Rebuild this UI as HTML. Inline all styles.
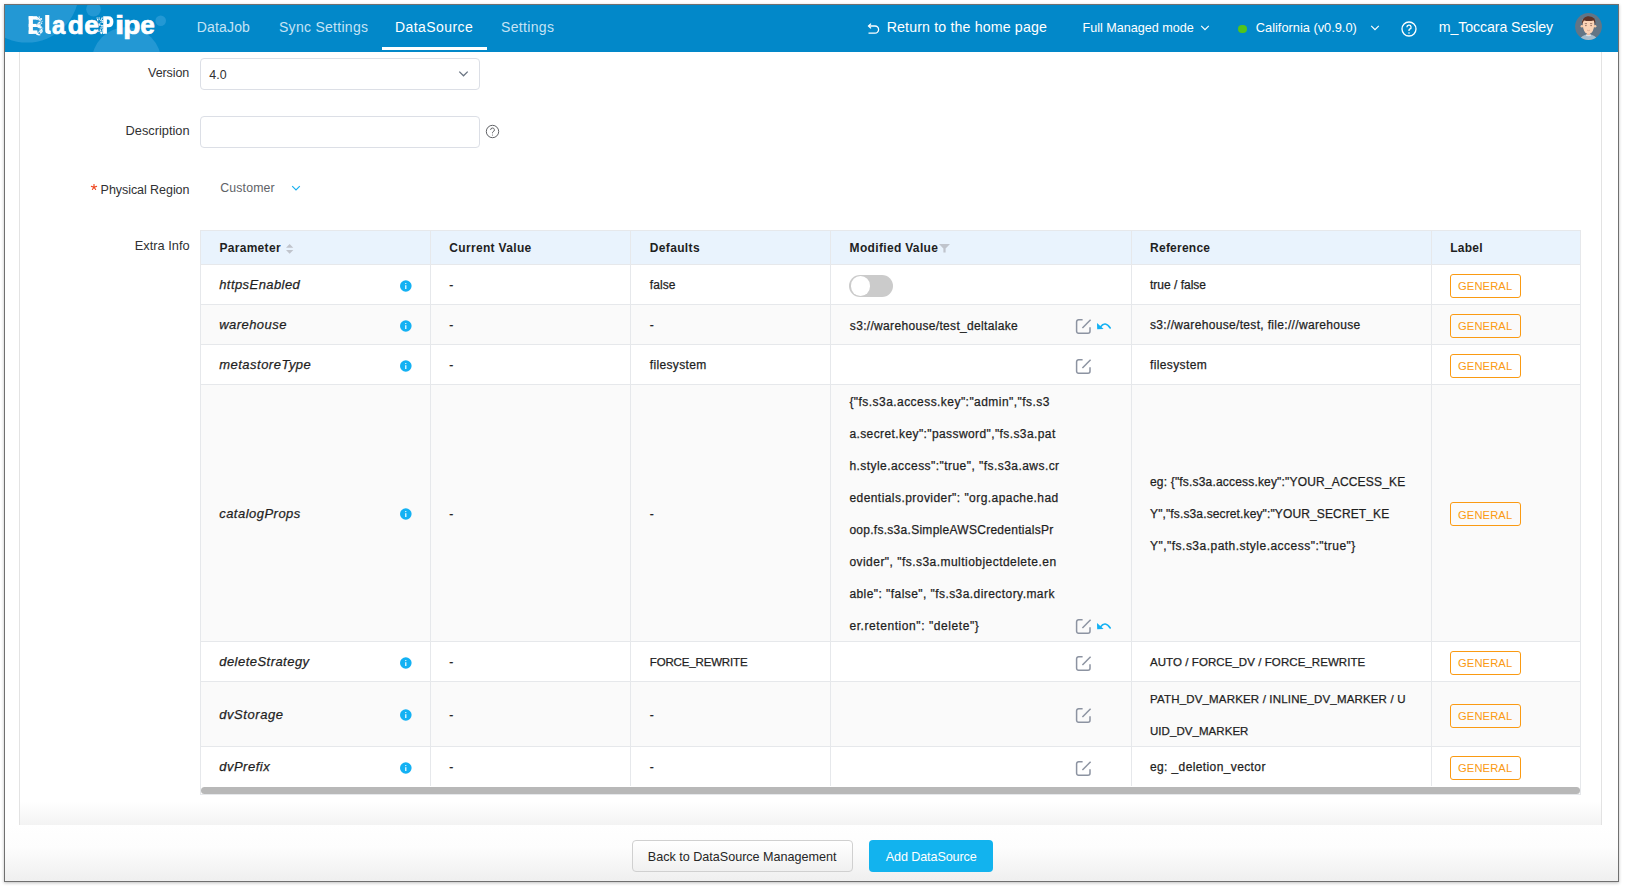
<!DOCTYPE html>
<html><head><meta charset="utf-8">
<style>
*{box-sizing:border-box;margin:0;padding:0}
html,body{width:1626px;height:888px;overflow:hidden;background:#fff;font-family:"Liberation Sans",sans-serif}
.r{position:absolute;display:block}
.t{position:absolute;white-space:pre;line-height:1;-webkit-text-stroke:0.25px currentColor}
</style></head><body>
<div class="r" style="left:4px;top:4px;width:1615px;height:878px;border:1px solid #707070;box-shadow:0 1px 3px rgba(0,0,0,.25);background:#fff"></div>
<div class="r" style="left:5px;top:5px;width:1613px;height:47px;background:#0288c9;overflow:hidden">
<svg width="1613" height="47" style="position:absolute;left:0;top:0">
<circle cx="22" cy="-14.4" r="52" fill="#2398d4"/>
<circle cx="88.5" cy="4.3" r="7.3" fill="#2398d4"/>
<circle cx="155.7" cy="15.8" r="5.3" fill="#2398d4"/>
<circle cx="121.5" cy="56.7" r="34.7" fill="#2398d4"/>
</svg></div>
<svg class="r" style="left:0;top:0" width="180" height="52" viewBox="0 0 180 52">
<rect x="28.7" y="16.2" width="4.2" height="17.7" fill="#fff"/>
<rect x="28.7" y="16.2" width="8.2" height="3.4" fill="#fff"/>
<rect x="28.7" y="23.9" width="8" height="3.1" fill="#fff"/>
<rect x="28.7" y="30.4" width="8.6" height="3.5" fill="#fff"/>
<rect x="37.8" y="18.4" width="1.3" height="1.3" fill="#fff" opacity="0.7"/><rect x="36.0" y="25.7" width="1.1" height="1.1" fill="#fff" opacity="1"/><rect x="38.5" y="31.2" width="0.9" height="0.9" fill="#fff" opacity="0.7"/><rect x="39.9" y="26.6" width="0.9" height="0.9" fill="#fff" opacity="1"/><rect x="37.0" y="26.1" width="0.9" height="0.9" fill="#fff" opacity="0.85"/><rect x="38.4" y="25.8" width="1.3" height="1.3" fill="#fff" opacity="0.85"/><rect x="39.4" y="28.5" width="0.9" height="0.9" fill="#fff" opacity="1"/><rect x="39.5" y="19.1" width="0.9" height="0.9" fill="#fff" opacity="1"/><rect x="40.5" y="26.2" width="1.3" height="1.3" fill="#fff" opacity="0.7"/><rect x="39.0" y="25.6" width="1.1" height="1.1" fill="#fff" opacity="0.85"/><rect x="39.6" y="24.1" width="1.1" height="1.1" fill="#fff" opacity="0.7"/><rect x="41.1" y="28.8" width="0.9" height="0.9" fill="#fff" opacity="0.7"/><rect x="39.5" y="25.5" width="1.1" height="1.1" fill="#fff" opacity="1"/><rect x="38.6" y="27.1" width="0.9" height="0.9" fill="#fff" opacity="0.7"/><rect x="39.1" y="18.6" width="1.1" height="1.1" fill="#fff" opacity="0.7"/><rect x="39.4" y="30.5" width="1.1" height="1.1" fill="#fff" opacity="0.85"/><rect x="40.4" y="26.8" width="1.3" height="1.3" fill="#fff" opacity="0.85"/><rect x="37.7" y="26.5" width="1.3" height="1.3" fill="#fff" opacity="0.85"/><rect x="37.5" y="22.8" width="1.3" height="1.3" fill="#fff" opacity="0.85"/><rect x="36.7" y="17.7" width="0.9" height="0.9" fill="#fff" opacity="0.7"/><rect x="40.9" y="18.0" width="0.9" height="0.9" fill="#fff" opacity="0.85"/><rect x="38.2" y="32.1" width="0.9" height="0.9" fill="#fff" opacity="0.7"/><rect x="38.6" y="25.9" width="0.9" height="0.9" fill="#fff" opacity="0.85"/><rect x="41.5" y="20.8" width="1.1" height="1.1" fill="#fff" opacity="0.85"/><rect x="40.3" y="22.7" width="0.9" height="0.9" fill="#fff" opacity="0.7"/><rect x="36.1" y="18.4" width="1.3" height="1.3" fill="#fff" opacity="0.7"/><rect x="36.5" y="25.7" width="1.3" height="1.3" fill="#fff" opacity="1"/><rect x="37.7" y="17.9" width="1.3" height="1.3" fill="#fff" opacity="1"/><rect x="40.1" y="29.6" width="1.1" height="1.1" fill="#fff" opacity="1"/><rect x="41.1" y="23.0" width="1.1" height="1.1" fill="#fff" opacity="0.85"/><rect x="37.0" y="18.6" width="1.1" height="1.1" fill="#fff" opacity="1"/><rect x="36.6" y="17.4" width="1.1" height="1.1" fill="#fff" opacity="1"/><rect x="39.8" y="18.3" width="1.1" height="1.1" fill="#fff" opacity="0.85"/><rect x="39.7" y="24.5" width="0.9" height="0.9" fill="#fff" opacity="0.85"/><rect x="38.9" y="17.1" width="0.9" height="0.9" fill="#fff" opacity="1"/><rect x="41.3" y="18.6" width="0.9" height="0.9" fill="#fff" opacity="0.7"/><rect x="36.5" y="25.8" width="0.9" height="0.9" fill="#fff" opacity="1"/><rect x="36.1" y="31.6" width="1.3" height="1.3" fill="#fff" opacity="0.85"/><rect x="37.1" y="25.8" width="1.3" height="1.3" fill="#fff" opacity="0.85"/><rect x="40.0" y="27.2" width="0.9" height="0.9" fill="#fff" opacity="0.7"/><rect x="41.2" y="29.6" width="0.9" height="0.9" fill="#fff" opacity="0.7"/><rect x="39.1" y="22.3" width="0.9" height="0.9" fill="#fff" opacity="0.7"/><rect x="40.6" y="22.1" width="1.1" height="1.1" fill="#fff" opacity="0.7"/><rect x="39.9" y="32.6" width="0.9" height="0.9" fill="#fff" opacity="0.85"/><rect x="40.0" y="31.4" width="0.9" height="0.9" fill="#fff" opacity="0.85"/><rect x="41.0" y="29.8" width="1.1" height="1.1" fill="#fff" opacity="0.7"/><rect x="36.1" y="33.5" width="1.3" height="1.3" fill="#fff" opacity="0.85"/><rect x="36.1" y="18.5" width="0.9" height="0.9" fill="#fff" opacity="0.7"/><rect x="36.6" y="32.7" width="1.3" height="1.3" fill="#fff" opacity="0.7"/><rect x="39.8" y="26.8" width="1.1" height="1.1" fill="#fff" opacity="1"/><rect x="41.1" y="29.3" width="0.9" height="0.9" fill="#fff" opacity="1"/><rect x="40.7" y="18.1" width="0.9" height="0.9" fill="#fff" opacity="0.7"/><rect x="37.8" y="25.8" width="0.9" height="0.9" fill="#fff" opacity="0.7"/><rect x="38.7" y="26.6" width="1.3" height="1.3" fill="#fff" opacity="0.85"/><rect x="41.3" y="32.2" width="0.9" height="0.9" fill="#fff" opacity="1"/><rect x="36.6" y="25.2" width="1.1" height="1.1" fill="#fff" opacity="0.7"/><rect x="39.8" y="30.2" width="0.9" height="0.9" fill="#fff" opacity="0.7"/><rect x="36.3" y="16.7" width="1.3" height="1.3" fill="#fff" opacity="1"/><rect x="39.2" y="24.7" width="0.9" height="0.9" fill="#fff" opacity="1"/><rect x="38.7" y="16.0" width="0.9" height="0.9" fill="#fff" opacity="0.85"/><rect x="37.8" y="34.0" width="1.3" height="1.3" fill="#fff" opacity="1"/><rect x="39.1" y="30.8" width="1.3" height="1.3" fill="#fff" opacity="0.7"/><rect x="40.4" y="32.2" width="1.1" height="1.1" fill="#fff" opacity="1"/><rect x="38.6" y="23.4" width="1.1" height="1.1" fill="#fff" opacity="0.85"/><rect x="38.5" y="19.5" width="1.1" height="1.1" fill="#fff" opacity="0.7"/><rect x="40.5" y="28.0" width="0.9" height="0.9" fill="#fff" opacity="0.85"/><rect x="37.0" y="33.6" width="1.1" height="1.1" fill="#fff" opacity="0.85"/><rect x="38.4" y="22.3" width="0.9" height="0.9" fill="#fff" opacity="1"/><rect x="38.2" y="25.3" width="1.1" height="1.1" fill="#fff" opacity="1"/><rect x="37.4" y="32.7" width="0.9" height="0.9" fill="#fff" opacity="0.85"/><rect x="40.8" y="31.1" width="1.3" height="1.3" fill="#fff" opacity="0.85"/><rect x="38.3" y="25.7" width="1.3" height="1.3" fill="#fff" opacity="1"/><rect x="39.0" y="21.7" width="1.1" height="1.1" fill="#fff" opacity="0.7"/><rect x="41.1" y="19.0" width="0.9" height="0.9" fill="#fff" opacity="0.85"/><rect x="42.1" y="27.6" width="1.1" height="1.1" fill="#fff" opacity="0.7"/><rect x="39.8" y="19.7" width="1.1" height="1.1" fill="#fff" opacity="0.7"/><rect x="38.7" y="21.9" width="1.3" height="1.3" fill="#fff" opacity="0.85"/><rect x="36.4" y="25.5" width="0.9" height="0.9" fill="#fff" opacity="0.7"/><rect x="36.8" y="33.2" width="1.3" height="1.3" fill="#fff" opacity="0.85"/><rect x="39.2" y="19.4" width="1.1" height="1.1" fill="#fff" opacity="1"/><rect x="40.2" y="20.6" width="0.9" height="0.9" fill="#fff" opacity="0.85"/><rect x="39.0" y="34.1" width="1.3" height="1.3" fill="#fff" opacity="0.85"/><rect x="37.2" y="24.0" width="1.3" height="1.3" fill="#fff" opacity="1"/><rect x="38.5" y="24.9" width="1.1" height="1.1" fill="#fff" opacity="1"/><rect x="41.7" y="29.3" width="0.9" height="0.9" fill="#fff" opacity="0.85"/><rect x="39.9" y="32.2" width="1.1" height="1.1" fill="#fff" opacity="0.7"/><rect x="38.2" y="25.1" width="1.1" height="1.1" fill="#fff" opacity="1"/><rect x="38.7" y="18.5" width="1.1" height="1.1" fill="#fff" opacity="0.7"/><rect x="37.3" y="33.8" width="1.3" height="1.3" fill="#fff" opacity="0.85"/><rect x="37.2" y="33.8" width="1.1" height="1.1" fill="#fff" opacity="0.7"/><rect x="38.2" y="24.5" width="1.3" height="1.3" fill="#fff" opacity="1"/><rect x="36.9" y="25.1" width="0.9" height="0.9" fill="#fff" opacity="0.7"/><rect x="37.3" y="17.2" width="1.1" height="1.1" fill="#fff" opacity="1"/><rect x="39.6" y="25.6" width="0.9" height="0.9" fill="#fff" opacity="1"/><rect x="41.7" y="30.4" width="1.3" height="1.3" fill="#fff" opacity="0.85"/><rect x="40.9" y="29.2" width="1.1" height="1.1" fill="#fff" opacity="0.7"/>
<path d="M45.2 14.9 H49.3 V29.8 Q49.3 30.8 50.8 30.8 V33.9 H48.6 Q45.2 33.9 45.2 30.6 Z" fill="#fff"/>
<text transform="translate(51.95,33.9) scale(0.934,1)" font-family="Liberation Sans" font-weight="bold" font-size="25.5" fill="#fff" stroke="#fff" stroke-width="0.7">a</text><text transform="translate(67.77,33.9) scale(1.031,1)" font-family="Liberation Sans" font-weight="bold" font-size="25.5" fill="#fff" stroke="#fff" stroke-width="0.7">d</text><text transform="translate(84.18,33.9) scale(1.024,1)" font-family="Liberation Sans" font-weight="bold" font-size="25.5" fill="#fff" stroke="#fff" stroke-width="0.7">e</text><text transform="translate(115.08,33.9) scale(1.306,1)" font-family="Liberation Sans" font-weight="bold" font-size="25.5" fill="#fff" stroke="#fff" stroke-width="0.7">i</text><text transform="translate(123.24,33.9) scale(1.100,1)" font-family="Liberation Sans" font-weight="bold" font-size="25.5" fill="#fff" stroke="#fff" stroke-width="0.7">p</text><text transform="translate(140.28,33.9) scale(1.024,1)" font-family="Liberation Sans" font-weight="bold" font-size="25.5" fill="#fff" stroke="#fff" stroke-width="0.7">e</text>
<path fill-rule="evenodd" d="M103.2 16.2 H108.3 Q113.4 16.2 113.4 21.7 Q113.4 27.2 108.3 27.2 H106.9 V33.7 H103.2 Z M106.9 19.5 H108 Q109.8 19.5 109.8 21.7 Q109.8 23.9 108 23.9 H106.9 Z" fill="#fff"/>
<rect x="101.5" y="25.3" width="1.1" height="1.1" fill="#fff" opacity="1"/><rect x="101.4" y="25.2" width="1.3" height="1.3" fill="#fff" opacity="1"/><rect x="100.5" y="30.5" width="0.9" height="0.9" fill="#fff" opacity="1"/><rect x="100.6" y="31.9" width="1.3" height="1.3" fill="#fff" opacity="1"/><rect x="101.0" y="18.0" width="0.9" height="0.9" fill="#fff" opacity="0.7"/><rect x="101.0" y="33.0" width="1.1" height="1.1" fill="#fff" opacity="0.85"/><rect x="100.4" y="27.3" width="1.3" height="1.3" fill="#fff" opacity="1"/><rect x="101.3" y="24.9" width="0.9" height="0.9" fill="#fff" opacity="0.85"/><rect x="102.1" y="29.4" width="1.3" height="1.3" fill="#fff" opacity="1"/><rect x="97.1" y="25.5" width="1.3" height="1.3" fill="#fff" opacity="1"/><rect x="99.8" y="30.4" width="1.1" height="1.1" fill="#fff" opacity="0.7"/><rect x="101.6" y="20.0" width="1.3" height="1.3" fill="#fff" opacity="1"/><rect x="99.2" y="24.7" width="1.3" height="1.3" fill="#fff" opacity="0.85"/><rect x="101.9" y="27.1" width="1.3" height="1.3" fill="#fff" opacity="0.7"/><rect x="97.0" y="19.0" width="1.1" height="1.1" fill="#fff" opacity="1"/><rect x="101.7" y="21.7" width="1.3" height="1.3" fill="#fff" opacity="0.7"/><rect x="96.6" y="17.5" width="1.1" height="1.1" fill="#fff" opacity="1"/><rect x="97.2" y="20.2" width="1.1" height="1.1" fill="#fff" opacity="0.85"/><rect x="101.5" y="21.4" width="1.1" height="1.1" fill="#fff" opacity="0.85"/><rect x="100.3" y="21.9" width="0.9" height="0.9" fill="#fff" opacity="0.85"/><rect x="96.6" y="24.4" width="1.3" height="1.3" fill="#fff" opacity="0.85"/><rect x="102.9" y="32.5" width="0.9" height="0.9" fill="#fff" opacity="1"/><rect x="97.1" y="29.4" width="1.1" height="1.1" fill="#fff" opacity="0.85"/><rect x="97.4" y="30.6" width="1.3" height="1.3" fill="#fff" opacity="0.85"/><rect x="102.7" y="28.6" width="0.9" height="0.9" fill="#fff" opacity="0.85"/><rect x="102.8" y="24.9" width="0.9" height="0.9" fill="#fff" opacity="0.7"/><rect x="96.5" y="25.0" width="1.1" height="1.1" fill="#fff" opacity="0.85"/><rect x="98.6" y="18.9" width="1.1" height="1.1" fill="#fff" opacity="0.85"/><rect x="98.7" y="31.0" width="0.9" height="0.9" fill="#fff" opacity="0.85"/><rect x="101.8" y="30.9" width="0.9" height="0.9" fill="#fff" opacity="0.7"/><rect x="101.5" y="32.0" width="1.1" height="1.1" fill="#fff" opacity="0.85"/><rect x="99.1" y="23.3" width="1.3" height="1.3" fill="#fff" opacity="0.7"/><rect x="99.0" y="23.9" width="1.1" height="1.1" fill="#fff" opacity="0.7"/><rect x="98.5" y="17.4" width="1.3" height="1.3" fill="#fff" opacity="0.85"/><rect x="100.9" y="19.1" width="1.1" height="1.1" fill="#fff" opacity="0.85"/><rect x="100.1" y="19.8" width="1.1" height="1.1" fill="#fff" opacity="0.85"/><rect x="102.7" y="30.5" width="1.3" height="1.3" fill="#fff" opacity="0.85"/><rect x="102.9" y="32.7" width="1.3" height="1.3" fill="#fff" opacity="0.7"/><rect x="101.5" y="17.4" width="1.3" height="1.3" fill="#fff" opacity="0.85"/><rect x="99.7" y="29.4" width="1.3" height="1.3" fill="#fff" opacity="0.85"/><rect x="99.9" y="32.2" width="1.3" height="1.3" fill="#fff" opacity="0.7"/><rect x="97.7" y="23.6" width="1.1" height="1.1" fill="#fff" opacity="0.85"/>
</svg>
<div class="t" style="left:196.80px;top:20.00px;font-size:14.0px;color:#c5e3f5;font-weight:normal;font-style:normal;letter-spacing:0.157px;-webkit-text-stroke:0;">DataJob</div>
<div class="t" style="left:279.00px;top:20.00px;font-size:14.0px;color:#c5e3f5;font-weight:normal;font-style:normal;letter-spacing:0.283px;-webkit-text-stroke:0;">Sync Settings</div>
<div class="t" style="left:395.00px;top:20.00px;font-size:14.0px;color:#ffffff;font-weight:normal;font-style:normal;letter-spacing:0.428px;-webkit-text-stroke:0;">DataSource</div>
<div class="t" style="left:501.00px;top:20.00px;font-size:14.0px;color:#c5e3f5;font-weight:normal;font-style:normal;letter-spacing:0.345px;-webkit-text-stroke:0;">Settings</div>
<div class="r" style="left:382px;top:47px;width:105px;height:3px;background:#fff"></div>
<svg class="r" style="left:866px;top:21px" width="15" height="14" viewBox="0 0 15 14">
<path d="M2.5 12.2 H9 A3.6 3.6 0 0 0 9 5 H3" fill="none" stroke="#fff" stroke-width="1.3"/>
<path d="M5 2.6 L2.5 5 L5 7.4" fill="none" stroke="#fff" stroke-width="1.3"/>
</svg>
<div class="t" style="left:886.70px;top:20.00px;font-size:14.2px;color:#fff;font-weight:normal;font-style:normal;letter-spacing:0.147px;-webkit-text-stroke:0;">Return to the home page</div>
<div class="t" style="left:1082.60px;top:22.00px;font-size:12.6px;color:#fff;font-weight:normal;font-style:normal;letter-spacing:-0.007px;-webkit-text-stroke:0;">Full Managed mode</div>
<svg class="r" style="left:1200px;top:24px" width="10" height="8" viewBox="0 0 10 8">
<path d="M1.2 1.8 L5 5.6 L8.8 1.8" fill="none" stroke="#fff" stroke-width="1.2"/></svg>
<div class="r" style="left:1238px;top:24.5px;width:8.5px;height:8.5px;background:#52c41a;border-radius:50%"></div>
<div class="t" style="left:1255.80px;top:22.00px;font-size:12.8px;color:#fff;font-weight:normal;font-style:normal;-webkit-text-stroke:0;">California (v0.9.0)</div>
<svg class="r" style="left:1370px;top:24px" width="10" height="8" viewBox="0 0 10 8">
<path d="M1.2 1.8 L5 5.6 L8.8 1.8" fill="none" stroke="#fff" stroke-width="1.2"/></svg>
<svg class="r" style="left:1401px;top:21px" width="16" height="16" viewBox="0 0 16 16">
<circle cx="8" cy="8" r="7" fill="none" stroke="#fff" stroke-width="1.3"/>
<path d="M5.9 6.2 A2.1 2.1 0 1 1 8.6 8.2 Q8 8.5 8 9.4 V10" fill="none" stroke="#fff" stroke-width="1.3"/>
<circle cx="8" cy="12" r="0.8" fill="#fff"/></svg>
<div class="t" style="left:1438.70px;top:20.00px;font-size:14.2px;color:#fff;font-weight:normal;font-style:normal;letter-spacing:-0.094px;-webkit-text-stroke:0;">m_Toccara Sesley</div>
<svg class="r" style="left:1575px;top:13px" width="27" height="27" viewBox="0 0 27 27">
<defs><clipPath id="ac"><circle cx="13.5" cy="13.5" r="13.4"/></clipPath></defs>
<g clip-path="url(#ac)">
<rect width="27" height="27" fill="#637585"/>
<ellipse cx="13.5" cy="26.5" rx="8.2" ry="5" fill="#a6bccb"/>
<ellipse cx="13.5" cy="22.2" rx="2.6" ry="1.1" fill="#dde7ee"/>
<rect x="11.9" y="18.5" width="3.2" height="3.6" fill="#efbd9e"/>
<circle cx="6.9" cy="13.3" r="1.3" fill="#f6c9a8"/>
<circle cx="20.1" cy="13.3" r="1.3" fill="#f6c9a8"/>
<path d="M7.6 6.5 Q7.4 16.6 10.3 19.4 Q13.5 21.9 16.7 19.4 Q19.6 16.6 19.4 6.5 Z" fill="#fbd3b6"/>
<path d="M6.9 12.2 Q6.2 4.6 12.6 3.2 Q17.2 2.8 19.6 5.8 Q20.8 8.6 20.1 12.2 Q19.6 9.2 18.6 7.6 Q14 8.6 9 7.6 Q7.6 9.4 6.9 12.2Z" fill="#5d3327"/>
<rect x="9.8" y="10.3" width="2.2" height="0.8" fill="#8a6658"/>
<rect x="15" y="10.3" width="2.2" height="0.8" fill="#8a6658"/>
<ellipse cx="10.9" cy="12.6" rx="0.9" ry="0.6" fill="#8a6658"/>
<ellipse cx="16.1" cy="12.6" rx="0.9" ry="0.6" fill="#8a6658"/>
<path d="M12 17.2 Q13.5 18 15 17.2" fill="none" stroke="#d9a48a" stroke-width="0.7"/>
</g></svg>
<div class="r" style="left:19px;top:52px;width:1583px;height:773px;border-left:1px solid #e3e3e3;border-right:1px solid #e3e3e3;background:linear-gradient(#fff 0,#fff 749px,#f3f3f3 773px)"></div>
<div class="r" style="left:5px;top:825px;width:1613px;height:56px;background:linear-gradient(#fff 0%,#fdfdfd 40%,#efefef 100%)"></div>
<div class="t" style="right:1436.84px;top:67.00px;font-size:12.5px;color:#303133;font-weight:normal;font-style:normal;letter-spacing:-0.090px;-webkit-text-stroke:0;">Version</div>
<div class="r" style="left:200px;top:58px;width:280px;height:32px;border:1px solid #dcdfe6;border-radius:4px;background:#fff"></div>
<div class="t" style="left:209.30px;top:69.00px;font-size:12.4px;color:#303133;font-weight:normal;font-style:normal;-webkit-text-stroke:0;">4.0</div>
<svg class="r" style="left:458px;top:69px" width="11" height="8" viewBox="0 0 11 8">
<path d="M1.3 2.6 L5.5 6.8 L9.7 2.6" fill="none" stroke="#6a7482" stroke-width="1.3"/></svg>
<div class="t" style="right:1436.37px;top:125.00px;font-size:12.8px;color:#303133;font-weight:normal;font-style:normal;letter-spacing:0.011px;-webkit-text-stroke:0;">Description</div>
<div class="r" style="left:200px;top:116px;width:280px;height:32px;border:1px solid #dcdfe6;border-radius:4px;background:#fff"></div>
<svg class="r" style="left:485px;top:124px" width="15" height="15" viewBox="0 0 15 15">
<circle cx="7.5" cy="7.5" r="6.2" fill="none" stroke="#606266" stroke-width="1"/>
<path d="M5.6 5.9 A1.9 1.9 0 1 1 8.1 7.7 Q7.5 8 7.5 8.8 V9.3" fill="none" stroke="#606266" stroke-width="1"/>
<circle cx="7.5" cy="11" r="0.6" fill="#606266"/></svg>
<svg class="r" style="left:90px;top:183px" width="8" height="8" viewBox="0 0 8 8"><g stroke="#ef4b26" stroke-width="1.15" stroke-linecap="round"><path d="M4 4.2 V1.6"/><path d="M4 4.2 L6.6 3.4"/><path d="M4 4.2 L5.6 6.5"/><path d="M4 4.2 L2.4 6.5"/><path d="M4 4.2 L1.4 3.4"/></g></svg>
<div class="t" style="right:1436.60px;top:184.00px;font-size:12.5px;color:#303133;font-weight:normal;font-style:normal;letter-spacing:-0.056px;-webkit-text-stroke:0;">Physical Region</div>
<div class="t" style="left:220.20px;top:182.00px;font-size:12.3px;color:#606266;font-weight:normal;font-style:normal;letter-spacing:0.171px;-webkit-text-stroke:0;">Customer</div>
<svg class="r" style="left:291px;top:185px" width="10" height="7" viewBox="0 0 10 7">
<path d="M1.2 1.2 L5 5 L8.8 1.2" fill="none" stroke="#1ab0ef" stroke-width="1.2"/></svg>
<div class="t" style="right:1436.37px;top:240.00px;font-size:12.8px;color:#303133;font-weight:normal;font-style:normal;letter-spacing:0.017px;-webkit-text-stroke:0;">Extra Info</div>
<div class="r" style="left:200px;top:230px;width:1381px;height:565px;border:1px solid #e6e8eb;background:#fff"></div>
<div class="r" style="left:201px;top:231px;width:1379px;height:33px;background:#e9f3fd"></div>
<div class="r" style="left:201px;top:265px;width:1379px;height:39px;background:#fff"></div>
<div class="r" style="left:201px;top:305px;width:1379px;height:39px;background:#fafafa"></div>
<div class="r" style="left:201px;top:345px;width:1379px;height:39px;background:#fff"></div>
<div class="r" style="left:201px;top:385px;width:1379px;height:256px;background:#fafafa"></div>
<div class="r" style="left:201px;top:642px;width:1379px;height:39px;background:#fff"></div>
<div class="r" style="left:201px;top:682px;width:1379px;height:64px;background:#fafafa"></div>
<div class="r" style="left:201px;top:747px;width:1379px;height:39px;background:#fff"></div>
<div class="r" style="left:201px;top:264px;width:1379px;height:1px;background:#e6e8eb"></div>
<div class="r" style="left:201px;top:304px;width:1379px;height:1px;background:#e6e8eb"></div>
<div class="r" style="left:201px;top:344px;width:1379px;height:1px;background:#e6e8eb"></div>
<div class="r" style="left:201px;top:384px;width:1379px;height:1px;background:#e6e8eb"></div>
<div class="r" style="left:201px;top:641px;width:1379px;height:1px;background:#e6e8eb"></div>
<div class="r" style="left:201px;top:681px;width:1379px;height:1px;background:#e6e8eb"></div>
<div class="r" style="left:201px;top:746px;width:1379px;height:1px;background:#e6e8eb"></div>
<div class="r" style="left:430px;top:231px;width:1px;height:555px;background:#e6e8eb"></div>
<div class="r" style="left:630px;top:231px;width:1px;height:555px;background:#e6e8eb"></div>
<div class="r" style="left:830px;top:231px;width:1px;height:555px;background:#e6e8eb"></div>
<div class="r" style="left:1131px;top:231px;width:1px;height:555px;background:#e6e8eb"></div>
<div class="r" style="left:1431px;top:231px;width:1px;height:555px;background:#e6e8eb"></div>
<div class="r" style="left:201px;top:787px;width:1379px;height:7px;background:#b8b8b8;border-radius:4px"></div>
<div class="t" style="left:219.40px;top:242.00px;font-size:12.0px;color:#1f1f1f;font-weight:bold;font-style:normal;letter-spacing:0.308px;-webkit-text-stroke:0;">Parameter</div>
<div class="t" style="left:449.30px;top:242.00px;font-size:12.0px;color:#1f1f1f;font-weight:bold;font-style:normal;letter-spacing:0.329px;-webkit-text-stroke:0;">Current Value</div>
<div class="t" style="left:649.80px;top:242.00px;font-size:12.0px;color:#1f1f1f;font-weight:bold;font-style:normal;letter-spacing:0.347px;-webkit-text-stroke:0;">Defaults</div>
<div class="t" style="left:849.60px;top:242.00px;font-size:12.0px;color:#1f1f1f;font-weight:bold;font-style:normal;letter-spacing:0.328px;-webkit-text-stroke:0;">Modified Value</div>
<div class="t" style="left:1150.10px;top:242.00px;font-size:12.0px;color:#1f1f1f;font-weight:bold;font-style:normal;letter-spacing:0.230px;-webkit-text-stroke:0;">Reference</div>
<div class="t" style="left:1450.20px;top:242.00px;font-size:12.0px;color:#1f1f1f;font-weight:bold;font-style:normal;letter-spacing:0.248px;-webkit-text-stroke:0;">Label</div>
<svg class="r" style="left:286px;top:244px" width="8" height="10" viewBox="0 0 8 10">
<path d="M0 3.8 L3.65 0 L7.3 3.8Z M0 6 L3.65 9.8 L7.3 6Z" fill="#c0c4cc"/></svg>
<svg class="r" style="left:939px;top:244px" width="12" height="9" viewBox="0 0 12 9">
<path d="M0 0 H11 L6.6 4.6 V8.6 H4.4 V4.6Z" fill="#c0c4cc"/></svg>
<div class="t" style="left:219.20px;top:278.00px;font-size:13.0px;color:#1f1f1f;font-weight:normal;font-style:italic;letter-spacing:0.431px;">httpsEnabled</div>
<svg class="r" style="left:399.5px;top:279.6px" width="12" height="12" viewBox="0 0 12 12"><circle cx="5.8" cy="6" r="5.8" fill="#13b1f3"/><rect x="5.2" y="5.2" width="1.2" height="3.8" fill="#fff"/><circle cx="5.8" cy="3.6" r="0.7" fill="#fff"/></svg>
<div class="t" style="left:449.30px;top:279.00px;font-size:12.0px;color:#1f1f1f;font-weight:normal;font-style:normal;">-</div>
<div class="t" style="left:219.20px;top:318.00px;font-size:13.0px;color:#1f1f1f;font-weight:normal;font-style:italic;letter-spacing:0.454px;">warehouse</div>
<svg class="r" style="left:399.5px;top:319.6px" width="12" height="12" viewBox="0 0 12 12"><circle cx="5.8" cy="6" r="5.8" fill="#13b1f3"/><rect x="5.2" y="5.2" width="1.2" height="3.8" fill="#fff"/><circle cx="5.8" cy="3.6" r="0.7" fill="#fff"/></svg>
<div class="t" style="left:449.30px;top:319.00px;font-size:12.0px;color:#1f1f1f;font-weight:normal;font-style:normal;">-</div>
<div class="t" style="left:219.20px;top:358.00px;font-size:13.0px;color:#1f1f1f;font-weight:normal;font-style:italic;letter-spacing:0.491px;">metastoreType</div>
<svg class="r" style="left:399.5px;top:359.6px" width="12" height="12" viewBox="0 0 12 12"><circle cx="5.8" cy="6" r="5.8" fill="#13b1f3"/><rect x="5.2" y="5.2" width="1.2" height="3.8" fill="#fff"/><circle cx="5.8" cy="3.6" r="0.7" fill="#fff"/></svg>
<div class="t" style="left:449.30px;top:359.00px;font-size:12.0px;color:#1f1f1f;font-weight:normal;font-style:normal;">-</div>
<div class="t" style="left:219.20px;top:507.00px;font-size:13.0px;color:#1f1f1f;font-weight:normal;font-style:italic;letter-spacing:0.475px;">catalogProps</div>
<svg class="r" style="left:399.5px;top:508.1px" width="12" height="12" viewBox="0 0 12 12"><circle cx="5.8" cy="6" r="5.8" fill="#13b1f3"/><rect x="5.2" y="5.2" width="1.2" height="3.8" fill="#fff"/><circle cx="5.8" cy="3.6" r="0.7" fill="#fff"/></svg>
<div class="t" style="left:449.30px;top:508.00px;font-size:12.0px;color:#1f1f1f;font-weight:normal;font-style:normal;">-</div>
<div class="t" style="left:219.20px;top:655.00px;font-size:13.0px;color:#1f1f1f;font-weight:normal;font-style:italic;letter-spacing:0.467px;">deleteStrategy</div>
<svg class="r" style="left:399.5px;top:656.6px" width="12" height="12" viewBox="0 0 12 12"><circle cx="5.8" cy="6" r="5.8" fill="#13b1f3"/><rect x="5.2" y="5.2" width="1.2" height="3.8" fill="#fff"/><circle cx="5.8" cy="3.6" r="0.7" fill="#fff"/></svg>
<div class="t" style="left:449.30px;top:656.00px;font-size:12.0px;color:#1f1f1f;font-weight:normal;font-style:normal;">-</div>
<div class="t" style="left:219.20px;top:708.00px;font-size:13.0px;color:#1f1f1f;font-weight:normal;font-style:italic;letter-spacing:0.571px;">dvStorage</div>
<svg class="r" style="left:399.5px;top:709.1px" width="12" height="12" viewBox="0 0 12 12"><circle cx="5.8" cy="6" r="5.8" fill="#13b1f3"/><rect x="5.2" y="5.2" width="1.2" height="3.8" fill="#fff"/><circle cx="5.8" cy="3.6" r="0.7" fill="#fff"/></svg>
<div class="t" style="left:449.30px;top:709.00px;font-size:12.0px;color:#1f1f1f;font-weight:normal;font-style:normal;">-</div>
<div class="t" style="left:219.20px;top:760.00px;font-size:13.0px;color:#1f1f1f;font-weight:normal;font-style:italic;letter-spacing:0.506px;">dvPrefix</div>
<svg class="r" style="left:399.5px;top:761.6px" width="12" height="12" viewBox="0 0 12 12"><circle cx="5.8" cy="6" r="5.8" fill="#13b1f3"/><rect x="5.2" y="5.2" width="1.2" height="3.8" fill="#fff"/><circle cx="5.8" cy="3.6" r="0.7" fill="#fff"/></svg>
<div class="t" style="left:449.30px;top:761.00px;font-size:12.0px;color:#1f1f1f;font-weight:normal;font-style:normal;">-</div>
<div class="t" style="left:649.80px;top:279.00px;font-size:12.0px;color:#1f1f1f;font-weight:normal;font-style:normal;letter-spacing:0.082px;">false</div>
<div class="t" style="left:649.80px;top:319.00px;font-size:12.0px;color:#1f1f1f;font-weight:normal;font-style:normal;">-</div>
<div class="t" style="left:649.80px;top:359.00px;font-size:12.0px;color:#1f1f1f;font-weight:normal;font-style:normal;letter-spacing:0.339px;">filesystem</div>
<div class="t" style="left:649.80px;top:508.00px;font-size:12.0px;color:#1f1f1f;font-weight:normal;font-style:normal;">-</div>
<div class="t" style="left:649.80px;top:657.00px;font-size:11.5px;color:#1f1f1f;font-weight:normal;font-style:normal;letter-spacing:-0.158px;">FORCE_REWRITE</div>
<div class="t" style="left:649.80px;top:709.00px;font-size:12.0px;color:#1f1f1f;font-weight:normal;font-style:normal;">-</div>
<div class="t" style="left:649.80px;top:761.00px;font-size:12.0px;color:#1f1f1f;font-weight:normal;font-style:normal;">-</div>
<div class="r" style="left:849px;top:275px;width:44px;height:22px;background:#cbcbcb;border-radius:11px"></div>
<div class="r" style="left:850.6px;top:276.4px;width:19.2px;height:19.2px;background:#fff;border-radius:50%"></div>
<div class="t" style="left:849.80px;top:320.00px;font-size:12.0px;color:#1f1f1f;font-weight:normal;font-style:normal;letter-spacing:0.329px;">s3://warehouse/test_deltalake</div>
<svg class="r" style="left:1075px;top:318.0px" width="17" height="17" viewBox="0 0 17 17"><path d="M7.6 1.8 H3.6 A2 2 0 0 0 1.6 3.8 V13.2 A2 2 0 0 0 3.6 15.2 H13 A2 2 0 0 0 15 13.2 V9.2" fill="none" stroke="#8c93a1" stroke-width="1.5"/><path d="M7.4 10 L15.6 1.8" fill="none" stroke="#8c93a1" stroke-width="1.5"/></svg>
<svg class="r" style="left:1096px;top:322.0px" width="16" height="9" viewBox="0 0 16 9"><path d="M1 1 L1.2 7.2 L7.6 7 Z" fill="#13b1f3"/><path d="M4.4 5 Q9.2 -1.4 14.2 6" fill="none" stroke="#13b1f3" stroke-width="1.6" stroke-linecap="round"/></svg>
<svg class="r" style="left:1075px;top:358.0px" width="17" height="17" viewBox="0 0 17 17"><path d="M7.6 1.8 H3.6 A2 2 0 0 0 1.6 3.8 V13.2 A2 2 0 0 0 3.6 15.2 H13 A2 2 0 0 0 15 13.2 V9.2" fill="none" stroke="#8c93a1" stroke-width="1.5"/><path d="M7.4 10 L15.6 1.8" fill="none" stroke="#8c93a1" stroke-width="1.5"/></svg>
<div class="t" style="left:849.40px;top:396.00px;font-size:12.0px;color:#1f1f1f;font-weight:normal;font-style:normal;letter-spacing:0.449px;">{&quot;fs.s3a.access.key&quot;:&quot;admin&quot;,&quot;fs.s3</div>
<div class="t" style="left:849.40px;top:428.00px;font-size:12.0px;color:#1f1f1f;font-weight:normal;font-style:normal;letter-spacing:0.401px;">a.secret.key&quot;:&quot;password&quot;,&quot;fs.s3a.pat</div>
<div class="t" style="left:849.40px;top:460.00px;font-size:12.0px;color:#1f1f1f;font-weight:normal;font-style:normal;letter-spacing:0.449px;">h.style.access&quot;:&quot;true&quot;, &quot;fs.s3a.aws.cr</div>
<div class="t" style="left:849.40px;top:492.00px;font-size:12.0px;color:#1f1f1f;font-weight:normal;font-style:normal;letter-spacing:0.445px;">edentials.provider&quot;: &quot;org.apache.had</div>
<div class="t" style="left:849.40px;top:524.00px;font-size:12.0px;color:#1f1f1f;font-weight:normal;font-style:normal;letter-spacing:0.276px;">oop.fs.s3a.SimpleAWSCredentialsPr</div>
<div class="t" style="left:849.40px;top:556.00px;font-size:12.0px;color:#1f1f1f;font-weight:normal;font-style:normal;letter-spacing:0.464px;">ovider&quot;, &quot;fs.s3a.multiobjectdelete.en</div>
<div class="t" style="left:849.40px;top:588.00px;font-size:12.0px;color:#1f1f1f;font-weight:normal;font-style:normal;letter-spacing:0.436px;">able&quot;: &quot;false&quot;, &quot;fs.s3a.directory.mark</div>
<div class="t" style="left:849.40px;top:620.00px;font-size:12.0px;color:#1f1f1f;font-weight:normal;font-style:normal;letter-spacing:0.575px;">er.retention&quot;: &quot;delete&quot;}</div>
<svg class="r" style="left:1075px;top:618.0px" width="17" height="17" viewBox="0 0 17 17"><path d="M7.6 1.8 H3.6 A2 2 0 0 0 1.6 3.8 V13.2 A2 2 0 0 0 3.6 15.2 H13 A2 2 0 0 0 15 13.2 V9.2" fill="none" stroke="#8c93a1" stroke-width="1.5"/><path d="M7.4 10 L15.6 1.8" fill="none" stroke="#8c93a1" stroke-width="1.5"/></svg>
<svg class="r" style="left:1096px;top:622.0px" width="16" height="9" viewBox="0 0 16 9"><path d="M1 1 L1.2 7.2 L7.6 7 Z" fill="#13b1f3"/><path d="M4.4 5 Q9.2 -1.4 14.2 6" fill="none" stroke="#13b1f3" stroke-width="1.6" stroke-linecap="round"/></svg>
<svg class="r" style="left:1075px;top:655.0px" width="17" height="17" viewBox="0 0 17 17"><path d="M7.6 1.8 H3.6 A2 2 0 0 0 1.6 3.8 V13.2 A2 2 0 0 0 3.6 15.2 H13 A2 2 0 0 0 15 13.2 V9.2" fill="none" stroke="#8c93a1" stroke-width="1.5"/><path d="M7.4 10 L15.6 1.8" fill="none" stroke="#8c93a1" stroke-width="1.5"/></svg>
<svg class="r" style="left:1075px;top:707.0px" width="17" height="17" viewBox="0 0 17 17"><path d="M7.6 1.8 H3.6 A2 2 0 0 0 1.6 3.8 V13.2 A2 2 0 0 0 3.6 15.2 H13 A2 2 0 0 0 15 13.2 V9.2" fill="none" stroke="#8c93a1" stroke-width="1.5"/><path d="M7.4 10 L15.6 1.8" fill="none" stroke="#8c93a1" stroke-width="1.5"/></svg>
<svg class="r" style="left:1075px;top:760.0px" width="17" height="17" viewBox="0 0 17 17"><path d="M7.6 1.8 H3.6 A2 2 0 0 0 1.6 3.8 V13.2 A2 2 0 0 0 3.6 15.2 H13 A2 2 0 0 0 15 13.2 V9.2" fill="none" stroke="#8c93a1" stroke-width="1.5"/><path d="M7.4 10 L15.6 1.8" fill="none" stroke="#8c93a1" stroke-width="1.5"/></svg>
<div class="t" style="left:1150.00px;top:279.00px;font-size:12.0px;color:#1f1f1f;font-weight:normal;font-style:normal;">true / false</div>
<div class="t" style="left:1150.00px;top:319.00px;font-size:12.0px;color:#1f1f1f;font-weight:normal;font-style:normal;letter-spacing:0.329px;">s3://warehouse/test, file:///warehouse</div>
<div class="t" style="left:1150.00px;top:359.00px;font-size:12.0px;color:#1f1f1f;font-weight:normal;font-style:normal;letter-spacing:0.372px;">filesystem</div>
<div class="t" style="left:1150.00px;top:476.00px;font-size:12.0px;color:#1f1f1f;font-weight:normal;font-style:normal;letter-spacing:0.179px;">eg: {&quot;fs.s3a.access.key&quot;:&quot;YOUR_ACCESS_KE</div>
<div class="t" style="left:1150.00px;top:508.00px;font-size:12.0px;color:#1f1f1f;font-weight:normal;font-style:normal;letter-spacing:0.129px;">Y&quot;,&quot;fs.s3a.secret.key&quot;:&quot;YOUR_SECRET_KE</div>
<div class="t" style="left:1150.00px;top:540.00px;font-size:12.0px;color:#1f1f1f;font-weight:normal;font-style:normal;letter-spacing:0.479px;">Y&quot;,&quot;fs.s3a.path.style.access&quot;:&quot;true&quot;}</div>
<div class="t" style="left:1150.00px;top:657.00px;font-size:11.5px;color:#1f1f1f;font-weight:normal;font-style:normal;letter-spacing:0.069px;">AUTO / FORCE_DV / FORCE_REWRITE</div>
<div class="t" style="left:1150.00px;top:694.00px;font-size:11.5px;color:#1f1f1f;font-weight:normal;font-style:normal;letter-spacing:0.168px;">PATH_DV_MARKER / INLINE_DV_MARKER / U</div>
<div class="t" style="left:1150.00px;top:726.00px;font-size:11.5px;color:#1f1f1f;font-weight:normal;font-style:normal;letter-spacing:0.053px;">UID_DV_MARKER</div>
<div class="t" style="left:1150.00px;top:761.00px;font-size:12.0px;color:#1f1f1f;font-weight:normal;font-style:normal;letter-spacing:0.385px;">eg: _deletion_vector</div>
<div class="r" style="left:1450px;top:274px;width:71px;height:24px;border:1px solid #fa9a12;border-radius:3px"></div>
<div class="t" style="left:1458.00px;top:281.00px;font-size:11.2px;color:#fa9a12;font-weight:normal;font-style:normal;letter-spacing:0.109px;-webkit-text-stroke:0;">GENERAL</div>
<div class="r" style="left:1450px;top:314px;width:71px;height:24px;border:1px solid #fa9a12;border-radius:3px"></div>
<div class="t" style="left:1458.00px;top:321.00px;font-size:11.2px;color:#fa9a12;font-weight:normal;font-style:normal;letter-spacing:0.109px;-webkit-text-stroke:0;">GENERAL</div>
<div class="r" style="left:1450px;top:354px;width:71px;height:24px;border:1px solid #fa9a12;border-radius:3px"></div>
<div class="t" style="left:1458.00px;top:361.00px;font-size:11.2px;color:#fa9a12;font-weight:normal;font-style:normal;letter-spacing:0.109px;-webkit-text-stroke:0;">GENERAL</div>
<div class="r" style="left:1450px;top:502px;width:71px;height:24px;border:1px solid #fa9a12;border-radius:3px"></div>
<div class="t" style="left:1458.00px;top:510.00px;font-size:11.2px;color:#fa9a12;font-weight:normal;font-style:normal;letter-spacing:0.109px;-webkit-text-stroke:0;">GENERAL</div>
<div class="r" style="left:1450px;top:651px;width:71px;height:24px;border:1px solid #fa9a12;border-radius:3px"></div>
<div class="t" style="left:1458.00px;top:658.00px;font-size:11.2px;color:#fa9a12;font-weight:normal;font-style:normal;letter-spacing:0.109px;-webkit-text-stroke:0;">GENERAL</div>
<div class="r" style="left:1450px;top:704px;width:71px;height:24px;border:1px solid #fa9a12;border-radius:3px"></div>
<div class="t" style="left:1458.00px;top:711.00px;font-size:11.2px;color:#fa9a12;font-weight:normal;font-style:normal;letter-spacing:0.109px;-webkit-text-stroke:0;">GENERAL</div>
<div class="r" style="left:1450px;top:756px;width:71px;height:24px;border:1px solid #fa9a12;border-radius:3px"></div>
<div class="t" style="left:1458.00px;top:763.00px;font-size:11.2px;color:#fa9a12;font-weight:normal;font-style:normal;letter-spacing:0.109px;-webkit-text-stroke:0;">GENERAL</div>
<div class="r" style="left:632px;top:840px;width:221px;height:32px;border:1px solid #d0d0d0;border-radius:4px;background:linear-gradient(#fff,#f0f0f0)"></div>
<div class="t" style="left:647.80px;top:851.00px;font-size:12.6px;color:#262626;font-weight:normal;font-style:normal;letter-spacing:-0.011px;-webkit-text-stroke:0;">Back to DataSource Management</div>
<div class="r" style="left:869px;top:840px;width:124px;height:32px;background:#12b3ee;border-radius:4px"></div>
<div class="t" style="left:885.80px;top:851.00px;font-size:12.6px;color:#fff;font-weight:normal;font-style:normal;letter-spacing:-0.116px;-webkit-text-stroke:0;">Add DataSource</div>
</body></html>
